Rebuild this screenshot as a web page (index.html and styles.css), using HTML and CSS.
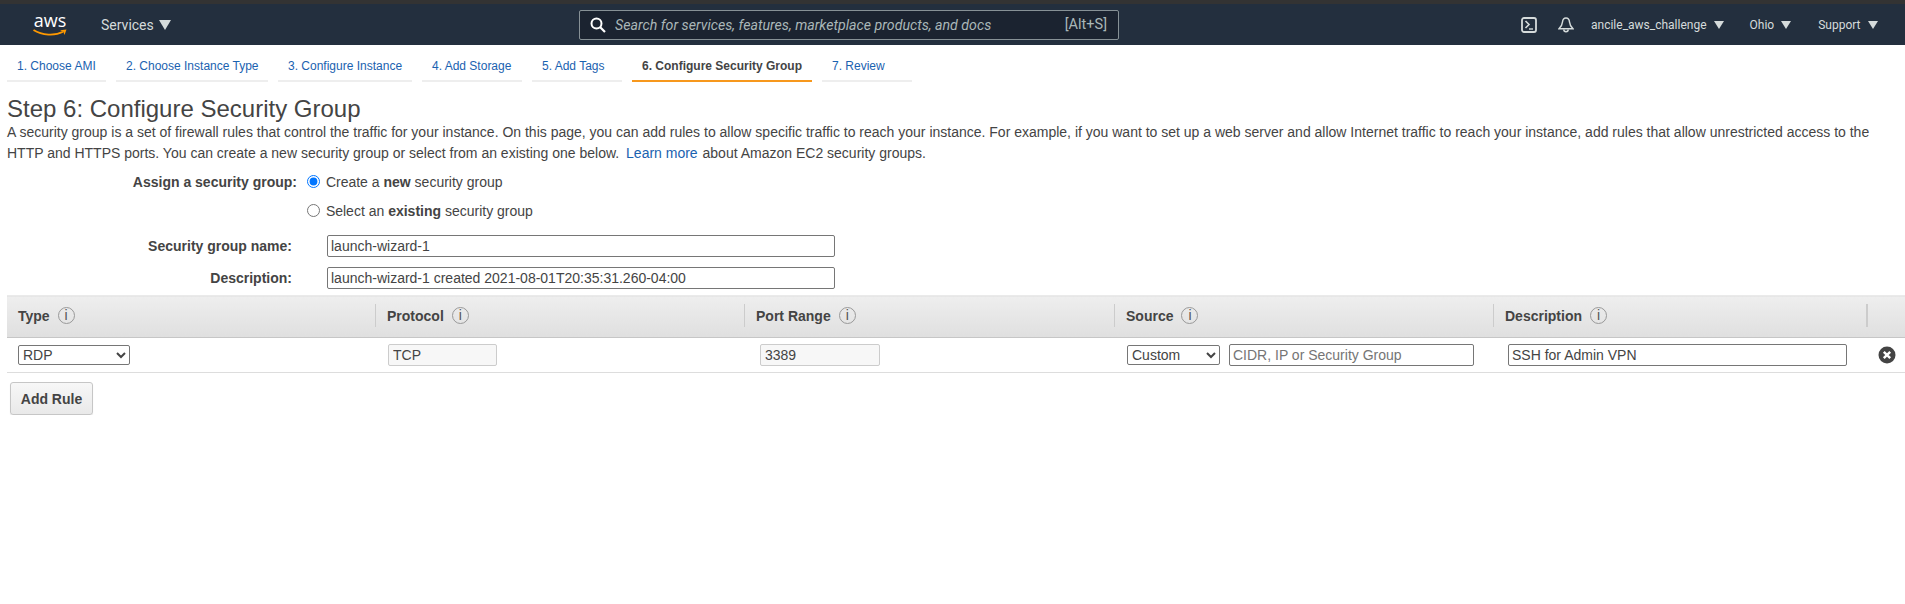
FILE: index.html
```html
<!DOCTYPE html>
<html lang="en">
<head>
  <meta charset="UTF-8">
  <title>Step 6: Configure Security Group</title>
  <link rel="stylesheet" href="styles.css">
</head>
<body>
  <div class="top-strip"></div>
  <nav class="console-nav">
    <a class="aws-logo">
      <span class="aws-word">aws</span>
      <svg class="aws-smile" width="34" height="8" viewBox="0 0 34 8">
        <path d="M.5 1C9 6.500 22 7 30 2.800" fill="none" stroke="#f90" stroke-width="1.800"/>
        <path d="M27 1.200L33.500 .6 31.500 6 30.300 2.800z" fill="#f90"/>
      </svg>
    </a>
    <span class="nav-item services">Services <i class="caret"></i></span>
    <div class="search-box">
      <svg class="search-icon" width="16" height="16" viewBox="0 0 16 16">
        <circle cx="6.500" cy="6.500" r="5" fill="none" stroke="#fff" stroke-width="2"/>
        <path d="M10 10l5 5" stroke="#fff" stroke-width="2.200"/>
      </svg>
      <span class="search-hint">Search for services, features, marketplace products, and docs</span>
      <span class="search-key">[Alt+S]</span>
    </div>
    <div class="nav-right">
      <svg class="term-icon" width="16" height="16" viewBox="0 0 16 16">
        <rect x="1" y="1" width="14" height="14" rx="2" fill="none" stroke="#d5dbdb" stroke-width="1.800"/>
        <path d="M4.500 4L8 7.500 4.500 11" fill="none" stroke="#d5dbdb" stroke-width="1.600"/>
        <path d="M8 12h4" stroke="#d5dbdb" stroke-width="1.400"/>
      </svg>
      <svg class="bell-icon" width="16" height="16" viewBox="0 0 16 16">
        <path d="M8 1C5.800 1 4.700 2.800 4.500 5 4.200 8.200 3 10 1 11.800h14C13 10 11.800 8.200 11.500 5 11.300 2.800 10.200 1 8 1z" fill="none" stroke="#d5dbdb" stroke-width="1.500"/>
        <path d="M5.800 12.500a2.200 2.200 0 0 0 4.400 0" fill="none" stroke="#d5dbdb" stroke-width="1.500"/>
      </svg>
      <span class="nav-item account">ancile_aws_challenge <i class="caret small"></i></span>
      <span class="nav-item region">Ohio <i class="caret small"></i></span>
      <span class="nav-item support">Support <i class="caret small"></i></span>
    </div>
  </nav>

  <ul class="wizard-tabs">
    <li class="tab tab-ami"><a>1. Choose AMI</a></li>
    <li class="tab tab-type"><a>2. Choose Instance Type</a></li>
    <li class="tab tab-config"><a>3. Configure Instance</a></li>
    <li class="tab tab-storage"><a>4. Add Storage</a></li>
    <li class="tab tab-tags"><a>5. Add Tags</a></li>
    <li class="tab tab-sg active"><a>6. Configure Security Group</a></li>
    <li class="tab tab-review"><a>7. Review</a></li>
  </ul>

  <main class="page">
    <h1>Step 6: Configure Security Group</h1>
    <p class="intro">A security group is a set of firewall rules that control the traffic for your instance. On this page, you can add rules to allow specific traffic to reach your instance. For example, if you want to set up a web server and allow Internet traffic to reach your instance, add rules that allow unrestricted access to the HTTP and HTTPS ports. You can create a new security group or select from an existing one below. <a class="link">Learn more</a> about Amazon EC2 security groups.</p>

    <form class="sg-form">
      <div class="assign-row">
        <div class="assign-label">Assign a security group:</div>
        <div class="assign-options">
          <label class="radio-line"><input type="radio" name="sg" checked> Create a <b>new</b> security group</label>
          <label class="radio-line"><input type="radio" name="sg"> Select an <b>existing</b> security group</label>
        </div>
      </div>
      <div class="field-row">
        <label class="field-label">Security group name:</label>
        <input class="field-input" type="text" value="launch-wizard-1">
      </div>
      <div class="field-row">
        <label class="field-label">Description:</label>
        <input class="field-input" type="text" value="launch-wizard-1 created 2021-08-01T20:35:31.260-04:00">
      </div>
    </form>

    <table class="rules">
      <colgroup>
        <col class="col-type"><col class="col-proto"><col class="col-port">
        <col class="col-source"><col class="col-desc"><col class="col-del">
      </colgroup>
      <thead>
        <tr>
          <th><span class="th-in">Type <i class="info">i</i></span></th>
          <th><span class="th-in">Protocol <i class="info">i</i></span></th>
          <th><span class="th-in">Port Range <i class="info">i</i></span></th>
          <th><span class="th-in">Source <i class="info">i</i></span></th>
          <th><span class="th-in">Description <i class="info">i</i></span></th>
          <th><span class="th-in th-end"></span></th>
        </tr>
      </thead>
      <tbody>
        <tr>
          <td><select class="sel-type"><option>RDP</option></select></td>
          <td><input class="ro-input ro-proto" type="text" value="TCP" disabled></td>
          <td><input class="ro-input ro-port" type="text" value="3389" disabled></td>
          <td>
            <div class="source-cell">
              <select class="sel-source"><option>Custom</option></select>
              <input class="txt-input src-input" type="text" placeholder="CIDR, IP or Security Group">
            </div>
          </td>
          <td><input class="txt-input desc-input" type="text" value="SSH for Admin VPN"></td>
          <td>
            <svg class="del-icon" width="18" height="18" viewBox="0 0 18 18">
              <circle cx="9" cy="9" r="8.500" fill="#444"/>
              <path d="M5.800 5.800l6.400 6.400M12.200 5.800l-6.400 6.400" stroke="#fff" stroke-width="2.400"/>
            </svg>
          </td>
        </tr>
      </tbody>
    </table>

    <button class="add-rule" type="button">Add Rule</button>
  </main>
</body>
</html>
```

FILE: styles.css
```css
body {
    font-family: 'Liberation Sans', Arial, sans-serif;
    font-size: 14px;
    color: #444;
    background-color: white;
    margin: 0;
}

.top-strip {
    height: 4px;
    background-color: #333;
}

.console-nav {
    height: 41px;
    background-color: #232f3e;
    color: #d5dbdb;
    display: flex;
    align-items: center;
    font-family: Roboto, sans-serif;
    font-size: 12px;
}

.aws-logo {
    width: 34px;
    margin-left: 33px;
    height: 30px;
    display: flex;
    flex-direction: column;
    align-items: center;
}
.aws-word {
    font-family: 'Open Sans', sans-serif;
    font-size: 18px;
    line-height: 20px;
    color: #fff;
}
.aws-smile {
    margin-top: -1px;
}

.nav-item {
    white-space: nowrap;
    display: flex;
    align-items: center;
}

.services {
    margin-left: 34px;
    font-size: 14px;
    width: 478px;
    gap: 5px;
}

.caret {
    display: inline-block;
    border-left: 6px solid transparent;
    border-right: 6px solid transparent;
    border-top: 10px solid #d5dbdb;
}
.caret.small {
    border-left-width: 5px;
    border-right-width: 5px;
    border-top-width: 8px;
    margin-left: 7px;
}

.search-box {
    width: 540px;
    height: 30px;
    box-sizing: border-box;
    background-color: #1b2330;
    border: 1px solid #879196;
    border-radius: 2px;
    display: flex;
    align-items: center;
    padding: 0 11px 0 10px;
}
.search-icon {
    margin-right: 9px;
}
.search-hint {
    font-style: italic;
    font-size: 14.200px;
    color: #aab7b8;
}
.search-key {
    margin-left: auto;
    color: #aab7b8;
    font-size: 14.500px;
}

.nav-right {
    margin-left: 402px;
    display: flex;
    align-items: center;
}
.bell-icon {
    margin-left: 21px;
}
.account {
    margin-left: 17px;
}
.region {
    margin-left: 26px;
}
.support {
    margin-left: 27px;
}

.wizard-tabs {
    list-style: none;
    margin: 0;
    padding: 0 0 0 7px;
    display: flex;
    gap: 10px;
    font-size: 12px;
}
.tab {
    height: 37px;
    box-sizing: border-box;
    border-bottom: 2px solid #eee;
    line-height: 42px;
    padding-left: 10px;
    color: #1a62b0;
}
.tab-ami { width: 99px; }
.tab-type { width: 152px; }
.tab-config { width: 134px; }
.tab-storage { width: 100px; }
.tab-tags { width: 90px; }
.tab-sg { width: 180px; }
.tab-review { width: 90px; }
.tab.active {
    border-bottom-color: #f7981d;
    color: #444;
    font-weight: bold;
}

.page {
    padding-left: 7px;
}

h1 {
    font-size: 24px;
    font-weight: normal;
    color: #444;
    margin: 13px 0 0 0;
    line-height: 27px;
}

.intro {
    margin: 0;
    line-height: 21px;
    font-size: 14px;
    width: 1890px;
}

.link {
    color: #1a62b0;
    margin: 0 1px 0 3px;
}

.sg-form {
    margin-top: 4px;
    margin-bottom: 6px;
}

.assign-row {
    display: flex;
    margin-bottom: 9px;
}
.assign-label {
    width: 290px;
    text-align: right;
    font-weight: bold;
    line-height: 29px;
}
.assign-options {
    margin-left: 10px;
}
.radio-line {
    display: block;
    height: 29px;
    line-height: 29px;
}
.radio-line input {
    margin: 0 2px 0 0;
    vertical-align: -1px;
}

.field-row {
    display: flex;
    align-items: center;
    height: 22px;
}
.field-row + .field-row {
    margin-top: 10px;
}
.field-label {
    width: 285px;
    text-align: right;
    font-weight: bold;
}
.field-input {
    margin-left: 35px;
    width: 508px;
    height: 22px;
    box-sizing: border-box;
}

input[type="text"] {
    font-family: 'Liberation Sans', Arial, sans-serif;
    font-size: 14px;
    padding: 0 3px;
    border: 1px solid #767676;
    border-radius: 2px;
    color: #444;
    background-color: #fff;
    outline: none;
}

.rules {
    table-layout: fixed;
    border-collapse: collapse;
    width: 1898px;
}
.col-type, .col-proto { width: 369px; }
.col-port { width: 370px; }
.col-source { width: 379px; }
.col-desc { width: 373px; }
.col-del { width: 38px; }

.rules th {
    height: 42px;
    padding: 0 0 2px 0;
    text-align: left;
    background: linear-gradient(#eee, #dfdfdf);
    border-bottom: 1px solid #c6c6c6;
    border-top: 1px solid #eaeaea;
    box-sizing: border-box;
}
.th-in {
    display: flex;
    align-items: center;
    gap: 8px;
    height: 23px;
    padding-left: 11px;
    border-right: 1px solid #ccc;
    box-sizing: border-box;
}
.th-end {
    border-right: none;
    border-left: 1px solid #ccc;
}
.info {
    width: 17px;
    height: 17px;
    box-sizing: border-box;
    border: 1px solid #999;
    border-radius: 50%;
    font: normal 14px/15px 'Liberation Sans', sans-serif;
    text-align: center;
    color: #555;
}

.rules td {
    height: 35px;
    padding: 0;
    border-bottom: 1px solid #ddd;
    box-sizing: border-box;
}

select {
    font-family: 'Liberation Sans', Arial, sans-serif;
    font-size: 14px;
    height: 20px;
    box-sizing: border-box;
    color: #444;
    background-color: #fff;
    border: 1px solid #767676;
    border-radius: 2px;
}
.sel-type {
    width: 112px;
    margin-left: 11px;
}
input.ro-input {
    height: 22px;
    box-sizing: border-box;
    background-color: #f7f7f7;
    border-color: #ccc;
    display: block;
    padding: 0 4px;
}
.ro-proto {
    width: 109px;
    margin-left: 12px;
}
.ro-port {
    width: 120px;
    margin-left: 15px;
}
.source-cell {
    display: flex;
    align-items: center;
    gap: 9px;
    padding-left: 12px;
}
.sel-source {
    width: 93px;
}
.txt-input {
    height: 22px;
    box-sizing: border-box;
}
.src-input {
    width: 245px;
}
.desc-input {
    width: 339px;
    margin-left: 14px;
    display: block;
}
.del-icon {
    display: block;
    margin-left: 11px;
}

.add-rule {
    display: block;
    margin: 9px 0 0 3px;
    width: 83px;
    height: 33px;
    font-family: 'Liberation Sans', Arial, sans-serif;
    font-size: 14px;
    font-weight: bold;
    color: #444;
    background: linear-gradient(#f7f7f7, #e9e9e9);
    border: 1px solid #c6c6c6;
    border-radius: 3px;
    box-shadow: 0 1px 1px rgba(0, 0, 0, .1);
}
```
